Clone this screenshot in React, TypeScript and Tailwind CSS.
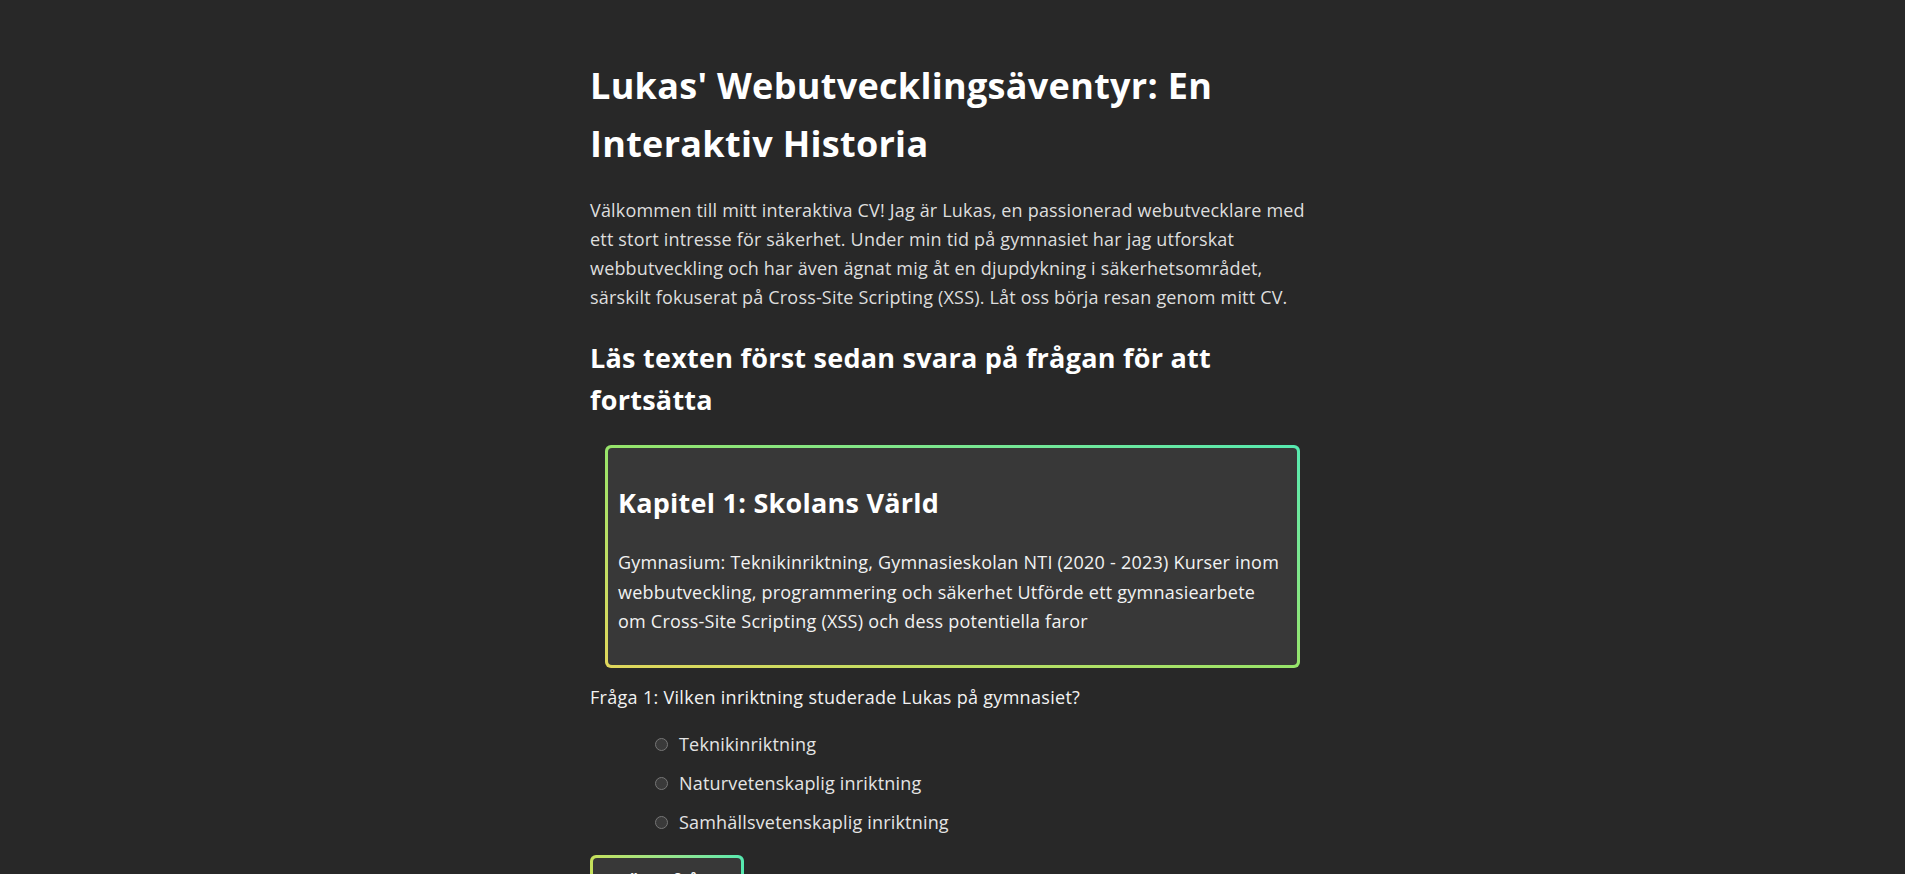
import React, { useState } from 'react';

const options = [
  'Teknikinriktning',
  'Naturvetenskaplig inriktning',
  'Samhällsvetenskaplig inriktning',
];

export default function App() {
  const [answer, setAnswer] = useState<string>('');

  return (
    <div className="min-h-screen bg-[#282828] text-white font-['Open_Sans','Noto_Sans',sans-serif] text-[18px] tracking-[0.18px]">
      <div className="mx-auto w-[725px] pt-[57px] pb-10">
        <h1 className="text-[36px] leading-[57.6px] font-bold tracking-[0.3px] text-white">
          Lukas' Webutvecklingsäventyr: En Interaktiv Historia
        </h1>

        <p className="mt-[24px] leading-[29px] text-[#dedede]">
          Välkommen till mitt interaktiva CV! Jag är Lukas, en passionerad webutvecklare med ett stort
          intresse för säkerhet. Under min tid på gymnasiet har jag utforskat webbutveckling och har även
          ägnat mig åt en djupdykning i säkerhetsområdet, särskilt fokuserat på Cross-Site Scripting (XSS).
          Låt oss börja resan genom mitt CV.
        </p>

        <h2 className="mt-[25px] text-[27px] leading-[42px] font-bold tracking-[0.25px] text-white">
          Läs texten först sedan svara på frågan för att fortsätta
        </h2>

        <div className="mx-[15px] mt-[24px] rounded-[6px] bg-linear-to-tr from-[#e0d75c] via-[#96e46a] to-[#55e9b0] p-[3px]">
          <div className="rounded-[4px] bg-[#383838] pl-[10px] pr-[12px] pt-[34px] pb-[28px]">
            <h2 className="text-[27px] leading-[42px] font-bold tracking-[0.25px] text-white">Kapitel 1: Skolans Värld</h2>
            <p className="mt-[24px] leading-[29.5px] tracking-[0.22px] text-[#f2f2f2]">
              Gymnasium: Teknikinriktning, Gymnasieskolan NTI (2020 - 2023) Kurser inom webbutveckling,
              programmering och säkerhet Utförde ett gymnasiearbete om Cross-Site Scripting (XSS) och dess
              potentiella faror
            </p>
          </div>
        </div>

        <p className="mt-[15px] leading-[28.8px] tracking-[0.3px] text-[#f2f2f2]">
          Fråga 1: Vilken inriktning studerade Lukas på gymnasiet?
        </p>

        <div className="mt-[19px] flex flex-col gap-[10px] pl-[65px]">
          {options.map((opt) => (
            <label key={opt} className="flex items-center gap-[11px] leading-[28.8px] text-[#e4e4e4] cursor-pointer">
              <span
                onClick={() => setAnswer(opt)}
                className="flex h-[13px] w-[13px] items-center justify-center rounded-full border border-[#767676] bg-[#3a3a3a]"
              >
                {answer === opt && <span className="h-[7px] w-[7px] rounded-full bg-[#9be36b]" />}
              </span>
              <span onClick={() => setAnswer(opt)}>{opt}</span>
            </label>
          ))}
        </div>

        <div className="mt-[18px] w-[154px] rounded-[6px] bg-linear-to-r from-[#c6e05a] to-[#55e9b0] p-[3px]">
          <button className="w-full rounded-[4px] bg-[#383838] py-[8px] text-[18px] leading-[28.8px] font-bold text-white">
            Nästa fråga
          </button>
        </div>
      </div>
    </div>
  );
}
